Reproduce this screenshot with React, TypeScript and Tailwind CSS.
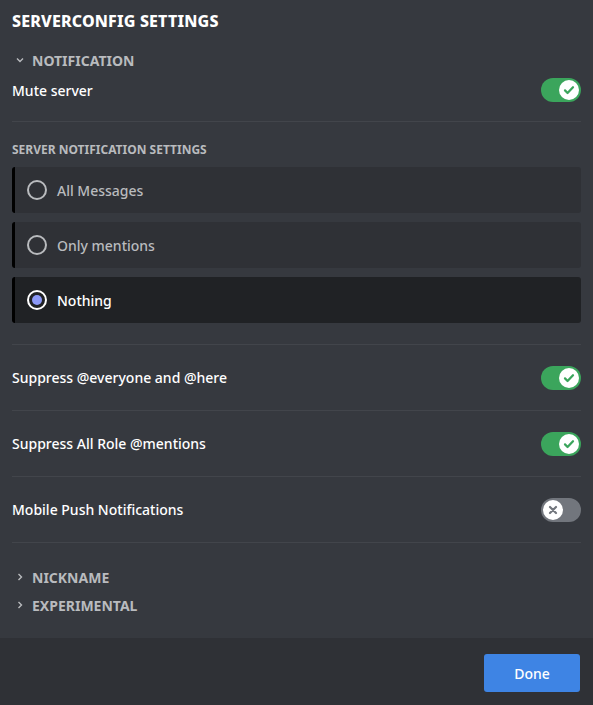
import React from 'react'

const font = { fontFamily: '"Noto Sans", "Open Sans", sans-serif' }

const Toggle = ({ on }: { on: boolean }) => {
  return (
    <div
      className={
        on
          ? 'w-10 h-6 rounded-full bg-[#3ba55c] flex items-center justify-end px-[2px] shrink-0'
          : 'w-10 h-6 rounded-full bg-[#72767d] flex items-center justify-start px-[2px] shrink-0'
      }
    >
      <div className="w-5 h-5 rounded-full bg-white flex items-center justify-center">
        {on ? (
          <svg width="16" height="16" viewBox="0 0 20 20">
            <path d="M5 10.5l3.2 3.2 6.8-7.2" fill="none" stroke="#3ba55c" strokeWidth="2.8" strokeLinecap="round" strokeLinejoin="round" />
          </svg>
        ) : (
          <svg width="12" height="12" viewBox="0 0 20 20">
            <path d="M5 5l10 10M15 5L5 15" fill="none" stroke="#72767d" strokeWidth="3.6" strokeLinecap="round" />
          </svg>
        )}
      </div>
    </div>
  )
}

const Chevron = ({ open }: { open: boolean }) => (
  <svg width="10" height="10" viewBox="0 0 10 10" className="shrink-0">
    {open ? (
      <path d="M2 3.5l3 3 3-3" fill="none" stroke="#b9bbbe" strokeWidth="1.4" />
    ) : (
      <path d="M3.5 2l3 3-3 3" fill="none" stroke="#b9bbbe" strokeWidth="1.4" />
    )}
  </svg>
)

const Radio = ({ label, selected }: { label: string; selected?: boolean }) => (
  <div
    className={
      selected
        ? 'h-[46px] rounded-[3px] border-l-[3px] border-black bg-[#202225] flex items-center pl-3 gap-[10px]'
        : 'h-[46px] rounded-[3px] border-l-[3px] border-black bg-[#2f3136] flex items-center pl-3 gap-[10px]'
    }
  >
    {selected ? (
      <div className="w-5 h-5 rounded-full border-2 border-white flex items-center justify-center">
        <div className="w-[10px] h-[10px] rounded-full bg-[#8c99f7]" />
      </div>
    ) : (
      <div className="w-5 h-5 rounded-full border-2 border-[#b9bbbe]" />
    )}
    <span className={selected ? 'text-white text-[14px] font-medium' : 'text-[#b9bbbe] text-[14px] font-medium'}>
      {label}
    </span>
  </div>
)

const ToggleRow = ({ label, on }: { label: string; on: boolean }) => (
  <div className="h-[66px] border-b border-[#42454b] flex items-center justify-between">
    <span className="text-white text-[14px] font-medium">{label}</span>
    <Toggle on={on} />
  </div>
)

export default function App() {
  return (
    <div className="w-[593px] h-[705px] bg-[#36393f] flex flex-col" style={font}>
      <div className="flex-1 px-3 pt-[11px]">
        <h1 className="text-white text-[16px] leading-5 font-extrabold uppercase tracking-[0.01em]">
          Serverconfig Settings
        </h1>

        <div className="mt-[19px] h-5 flex items-center gap-[7px] pl-[3px]">
          <Chevron open />
          <span className="text-[#b9bbbe] text-[14px] font-bold uppercase">Notification</span>
        </div>

        <div className="mt-2 flex items-center justify-between">
          <span className="text-white text-[14px] font-medium">Mute server</span>
          <Toggle on />
        </div>

        <div className="mt-[19px] border-t border-[#42454b]" />

        <div className="mt-5 h-4 flex items-center text-[#b9bbbe] text-[12px] font-bold uppercase">
          Server Notification Settings
        </div>

        <div className="mt-[9px] flex flex-col gap-[9px]">
          <Radio label="All Messages" />
          <Radio label="Only mentions" />
          <Radio label="Nothing" selected />
        </div>

        <div className="mt-[21px] border-t border-[#42454b]" />

        <ToggleRow label="Suppress @everyone and @here" on />
        <ToggleRow label="Suppress All Role @mentions" on />
        <ToggleRow label="Mobile Push Notifications" on={false} />

        <div className="mt-6 flex flex-col gap-2">
          <div className="h-5 flex items-center gap-[7px] pl-[3px]">
            <Chevron open={false} />
            <span className="text-[#b9bbbe] text-[14px] font-bold uppercase">Nickname</span>
          </div>
          <div className="h-5 flex items-center gap-[7px] pl-[3px]">
            <Chevron open={false} />
            <span className="text-[#b9bbbe] text-[14px] font-bold uppercase">Experimental</span>
          </div>
        </div>
      </div>

      <div className="h-[67px] bg-[#2f3136] flex items-start justify-end px-[13px] pt-4">
        <button className="w-24 h-[38px] rounded-[3px] bg-[#3e84e4] text-white text-[14px] font-medium">
          Done
        </button>
      </div>
    </div>
  )
}
